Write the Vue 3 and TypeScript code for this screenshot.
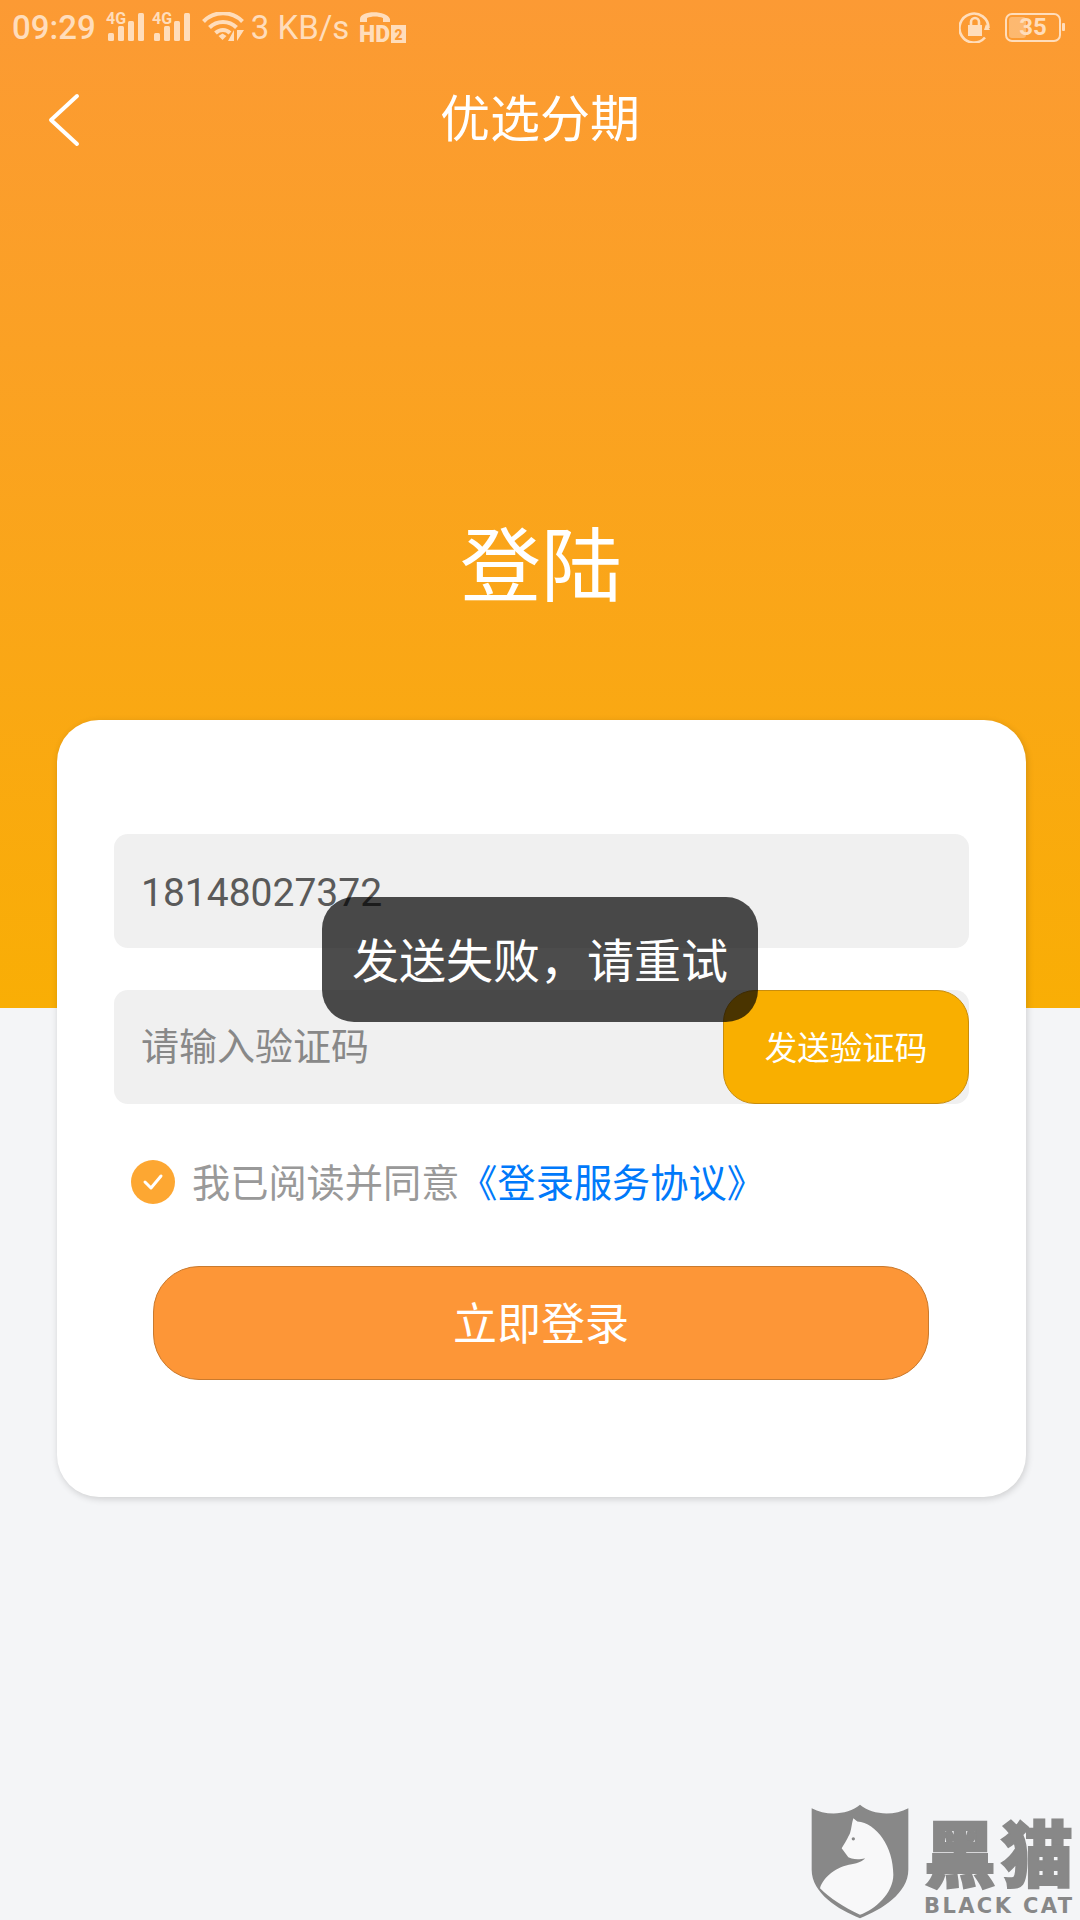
<script setup lang="ts">
const phone = '18148027372'
const signalBars = [
  { x: 2, y: 20, h: 8 },
  { x: 12, y: 13, h: 15 },
  { x: 22, y: 8, h: 20 },
  { x: 32, y: 0, h: 28 },
]
</script>

<template>
  <div class="page">
    <header class="hero">
      <div class="status-bar">
        <span class="time">09:29</span>
        <svg v-for="n in 2" :key="n" class="signal" width="40" height="30" viewBox="0 0 40 30">
          <text x="0" y="12" class="signal-text">4G</text>
          <rect v-for="b in signalBars" :key="b.x" :x="b.x" :y="b.y + 1" width="6" :height="b.h" rx="1.5" fill="#ffddbb" />
        </svg>
        <svg class="wifi" width="44" height="30" viewBox="0 0 44 30" fill="none" stroke="#ffddbb" stroke-width="4">
          <path d="M1.5 9.5 C12 -1.5 30 -1.5 40.5 9.5" />
          <path d="M7.5 15.5 C15 8 27 8 34.5 15.5" />
          <path d="M13.5 21 C18 17 24 17 28 21" />
          <path d="M16.5 24 L20.5 21.5 L24.5 24 L20.5 28 Z" fill="#ffddbb" stroke="none" />
          <path d="M32 29 L32 18 L26 29 Z M35 18 L35 29 L42 18 Z" fill="#ffddbb" stroke="none" />
        </svg>
        <span class="speed">3 KB/s</span>
        <svg class="hd" width="48" height="34" viewBox="0 0 48 34">
          <path d="M1 9 C1 0 28 0 31 9 L31 12 L24 12 L24 8 C19 6 13 6 8 8 L8 12 L1 12 Z" fill="#ffddbb" />
          <text x="0" y="32" class="hd-text">HD</text>
          <rect x="32" y="15" width="15" height="18" fill="#ffddbb" />
          <text x="35.5" y="29.5" class="hd-two">2</text>
        </svg>
        <span class="status-fill"></span>
        <svg class="lock" width="32" height="32" viewBox="0 0 32 32" fill="none" stroke="#ffddbb" stroke-width="2.6">
          <path d="M26 26.5 A14.5 14.5 0 1 1 29.5 17" />
          <path d="M27 13 L31 19 L25 19 Z" fill="#ffddbb" stroke="none" />
          <rect x="9" y="14" width="14" height="11" fill="#ffddbb" stroke="none" />
          <path d="M12 14 V11 A4 4 0 0 1 20 11 V14" />
        </svg>
        <div class="battery">
          <div class="battery-fill"></div>
          <span class="battery-num">35</span>
        </div>
        <span class="battery-nub"></span>
      </div>

      <nav class="nav">
        <svg class="back" width="32" height="54" viewBox="0 0 32 54" fill="none" stroke="#fff" stroke-width="4" stroke-linecap="round" stroke-linejoin="round">
          <polyline points="29,3 3,27 29,51" />
        </svg>
        <span class="nav-title">优选分期</span>
      </nav>

      <h1 class="title">登陆</h1>
    </header>

    <main class="card">
      <div class="field">
        <span class="phone">{{ phone }}</span>
      </div>
      <div class="field code-field">
        <span class="placeholder">请输入验证码</span>
        <button class="send-btn">发送验证码</button>
      </div>
      <div class="agree">
        <span class="check">
          <svg width="22" height="18" viewBox="0 0 22 18" fill="none" stroke="#fff" stroke-width="3" stroke-linecap="round" stroke-linejoin="round">
            <polyline points="3,9 9,15 19,3" />
          </svg>
        </span>
        <span class="agree-text">我已阅读并同意</span><span class="agree-link">《登录服务协议》</span>
      </div>
      <button class="login-btn">立即登录</button>
    </main>

    <div class="toast">发送失败，请重试</div>

    <div class="watermark">
      <svg class="shield" width="100" height="117" viewBox="0 0 300 350">
        <path d="M5 15 C50 40 115 35 150 5 C185 35 250 40 295 15 L295 200 C295 270 215 320 150 345 C85 320 5 270 5 200 Z" fill="#888" />
        <path d="M130 45 L142 55 C200 60 250 130 250 215 C250 270 195 320 150 335 C100 310 60 285 30 255 C40 220 80 190 125 183 C145 180 160 172 165 165 C140 172 120 165 115 162 L95 135 C105 120 115 100 120 90 C125 75 125 60 130 45 Z" fill="#f8f8f9" />
        <circle cx="130" cy="107" r="5" fill="#888" />
      </svg>
      <div class="mark-text">
        <span class="mark-cn">黑猫</span>
        <span class="mark-en">BLACK CAT</span>
      </div>
    </div>
  </div>
</template>

<style>
html,
body {
  margin: 0;
  background: #f3f4f6;
}
</style>

<style scoped>
.page {
  position: relative;
  width: 1080px;
  height: 1920px;
  overflow: hidden;
  background: #f4f5f7;
  font-family: "Noto Sans CJK SC", "Noto Sans", sans-serif;
}

.hero {
  height: 1008px;
  background: linear-gradient(180deg, #fc9a34 0%, #f9ae05 100%);
  display: flex;
  flex-direction: column;
}

.status-bar {
  height: 54px;
  display: flex;
  align-items: center;
  padding: 0 15px 0 12px;
  font-family: Roboto, sans-serif;
  color: #ffddbb;
}
.time {
  font-size: 33px;
  font-weight: 500;
  margin-right: 10px;
}
.signal {
  margin-right: 6px;
  overflow: visible;
}
.signal-text {
  font-family: Roboto, sans-serif;
  font-size: 16px;
  font-weight: 700;
  fill: #ffddbb;
}
.wifi {
  margin-left: 4px;
}
.speed {
  font-size: 33px;
  margin-left: 5px;
}
.hd {
  margin-left: 10px;
  overflow: visible;
}
.hd-text {
  font-family: Roboto, sans-serif;
  font-size: 23px;
  font-weight: 900;
  fill: #ffddbb;
}
.hd-two {
  font-family: Roboto, sans-serif;
  font-size: 14px;
  font-weight: 900;
  fill: #fc9a34;
}
.status-fill {
  flex: 1;
}
.lock {
  margin-right: 14px;
}
.battery {
  position: relative;
  width: 56px;
  height: 29px;
  box-sizing: border-box;
  border: 2px solid #ffddbb;
  border-radius: 7px;
  display: flex;
  align-items: center;
  justify-content: center;
}
.battery-fill {
  position: absolute;
  left: 2px;
  top: 2px;
  bottom: 2px;
  width: 17px;
  border-radius: 3px;
  background: rgba(255, 221, 187, 0.45);
}
.battery-num {
  position: relative;
  font-size: 24px;
  font-weight: 700;
}
.battery-nub {
  width: 3px;
  height: 8px;
  margin-left: 1px;
  background: #ffddbb;
  border-radius: 1px;
}

.nav {
  position: relative;
  height: 130px;
  display: flex;
  align-items: center;
  justify-content: center;
}
.back {
  position: absolute;
  left: 48px;
  top: 39px;
}
.nav-title {
  color: #fff;
  font-size: 50px;
  line-height: 1;
  margin-top: -8px;
}

.title {
  margin: 328px 0 0;
  padding-left: 2px;
  text-align: center;
  color: #fff;
  font-size: 81px;
  font-weight: 400;
  line-height: 96px;
}

.card {
  position: relative;
  width: 969px;
  height: 777px;
  box-sizing: border-box;
  margin: -288px 0 0 57px;
  padding: 114px 57px 0;
  background: #fff;
  border-radius: 42px;
  box-shadow: 1px 2px 7px rgba(0, 0, 0, 0.16);
}

.field {
  height: 114px;
  display: flex;
  align-items: center;
  padding-left: 27px;
  background: #f0f0f0;
  border-radius: 14px;
}
.code-field {
  margin-top: 42px;
  padding-left: 27px;
  justify-content: space-between;
}
.phone {
  font-family: Roboto, sans-serif;
  font-size: 39px;
  color: #5a5a5a;
  margin-top: 4px;
}
.placeholder {
  font-size: 38px;
  color: #888;
  margin-top: -8px;
}
.send-btn {
  width: 246px;
  height: 114px;
  box-sizing: border-box;
  border: 1px solid #c98d0c;
  border-radius: 32px;
  background: #f9af00;
  color: #fff;
  font-family: inherit;
  font-size: 32.5px;
  padding: 0 0 4px;
}

.agree {
  display: flex;
  align-items: center;
  margin: 56px 0 0 17px;
  height: 44px;
  font-size: 38.2px;
}
.check {
  width: 44px;
  height: 44px;
  border-radius: 50%;
  background: #fda732;
  display: flex;
  align-items: center;
  justify-content: center;
  margin-right: 17px;
}
.agree-text {
  color: #999;
  white-space: nowrap;
  margin-top: -4px;
}
.agree-link {
  color: #0079fa;
  white-space: nowrap;
  margin-top: -4px;
}

.login-btn {
  display: block;
  width: 776px;
  height: 114px;
  box-sizing: border-box;
  margin: 62px 0 0 39px;
  border: 1px solid #c97a2e;
  border-radius: 46px;
  background: #fd9637;
  color: #fff;
  font-family: inherit;
  font-size: 44px;
  padding: 0 0 4px;
}

.toast {
  position: absolute;
  left: 322px;
  top: 897px;
  width: 436px;
  height: 125px;
  box-sizing: border-box;
  padding-bottom: 4px;
  display: flex;
  align-items: center;
  justify-content: center;
  background: rgba(0, 0, 0, 0.7);
  border-radius: 32px;
  color: #fff;
  font-size: 47px;
  white-space: nowrap;
}

.watermark {
  position: absolute;
  left: 810px;
  top: 1803px;
  display: flex;
  gap: 14px;
  color: #888;
}
.mark-text {
  display: flex;
  flex-direction: column;
  align-items: flex-start;
  padding-top: 3px;
}
.mark-cn {
  font-size: 72px;
  font-weight: 900;
  line-height: 88px;
  letter-spacing: 5px;
  -webkit-text-stroke: 2px #888;
  white-space: nowrap;
}
.mark-en {
  font-family: "DejaVu Sans", sans-serif;
  font-size: 21px;
  font-weight: 700;
  line-height: 24px;
  letter-spacing: 2.4px;
  white-space: nowrap;
}
</style>
